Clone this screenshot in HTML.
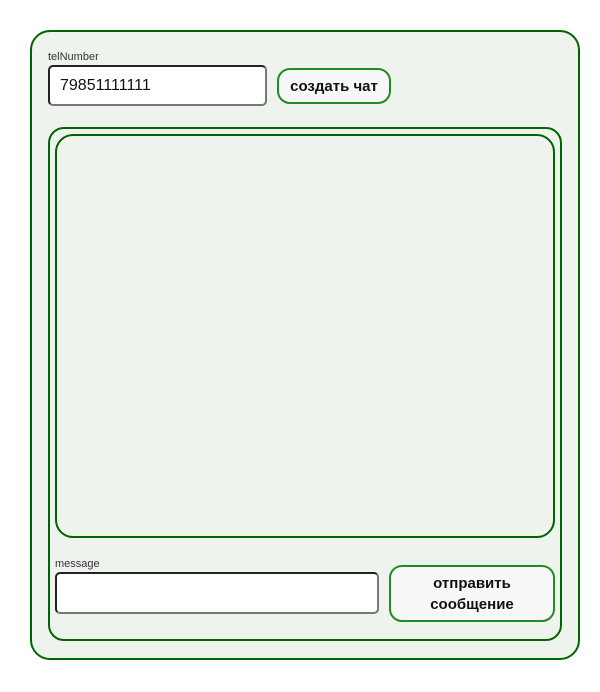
<!DOCTYPE html>
<html><head><meta charset="utf-8"><style>
body{margin:0;width:600px;height:692px;background:#fff;font-family:"Liberation Sans","DejaVu Sans",sans-serif;position:relative;overflow:hidden}
div{position:absolute;box-sizing:border-box}
.outer{left:30px;top:30px;width:550px;height:630px;border:2px solid #006400;border-radius:20px;background:#eef3ee}
.inner{left:48px;top:127px;width:514px;height:514px;border:2px solid #006400;border-radius:16px}
.chat{left:55px;top:134px;width:500px;height:404px;border:2px solid #006400;border-radius:18px}
.lbl{font-size:11px;color:#333}
.inp{background:#fff;border:2px solid #222;border-right-color:#777;border-bottom-color:#777;border-radius:5px}
.btn{background:#f7f7f7;border:2px solid #228b22;border-radius:13px;font-weight:bold;color:#111;text-align:center;font-family:"Liberation Sans",sans-serif}
</style></head><body>
<div class="outer"></div>
<div class="inner"></div>
<div class="chat"></div>
<div class="lbl" style="left:48px;top:51px">telNumber</div>
<div class="inp" style="left:48px;top:65px;width:219px;height:41px;font-size:16px;padding:10px 0 0 10px;color:#111">79851111111</div>
<div class="btn" style="left:277px;top:68px;width:114px;height:36px;font-size:15px;line-height:34px">создать чат</div>
<div class="lbl" style="left:55px;top:558px">message</div>
<div class="inp" style="left:55px;top:572px;width:324px;height:42px"></div>
<div class="btn" style="left:389px;top:565px;width:166px;height:57px;font-size:15px;line-height:21px;padding-top:6px">отправить<br>сообщение</div>
</body></html>
